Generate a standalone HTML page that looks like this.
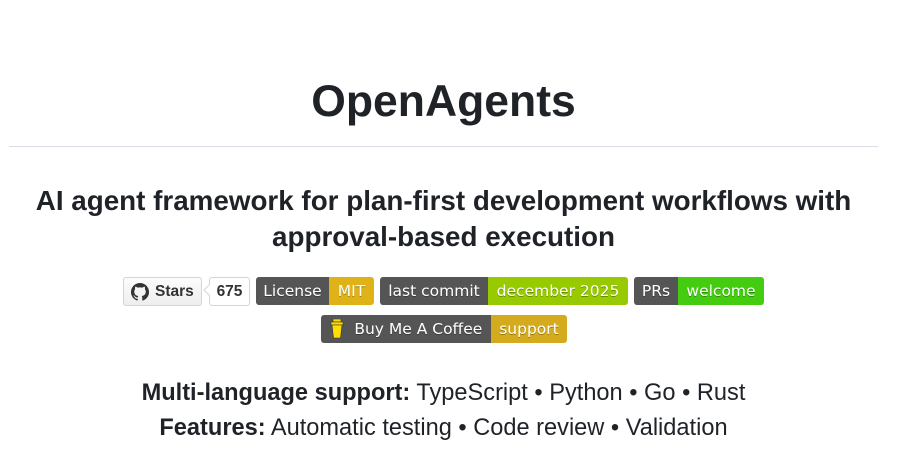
<!DOCTYPE html>
<html><head><meta charset="utf-8"><style>
body{margin:0;width:922px;height:461px;background:#fff;font-family:"Liberation Sans",Arial,sans-serif;color:#1f2328;position:relative;overflow:hidden}
.a{position:absolute}
h1{position:absolute;left:9px;width:869px;top:76px;margin:0;text-align:center;font-size:44.5px;font-weight:bold;line-height:52px}
.hr{position:absolute;left:9px;width:869px;top:146px;height:1px;background:#d8dee4}
h2{position:absolute;left:0;width:887px;top:183px;margin:0;text-align:center;font-size:27.8px;font-weight:bold;line-height:36px}
.b{position:absolute;height:28px;top:277px;border-radius:3px;overflow:hidden;display:flex;font-family:"DejaVu Sans",sans-serif;font-size:15.5px;color:#fff;line-height:28px}
.b span{display:block;text-align:center;text-shadow:0 1px 0 rgba(0,0,0,.3)}
.g{background:#555}
p{position:absolute;left:0;width:887px;margin:0;text-align:center;font-size:23.6px;line-height:30px}
</style></head><body>
<h1>OpenAgents</h1>
<div class="hr"></div>
<h2>AI agent framework for plan-first development workflows with<br>approval-based execution</h2>

<div class="a" style="left:123px;top:277px;width:77px;height:27px;border:1px solid #d5d5d5;border-radius:3px;background:linear-gradient(#fcfcfc,#eee);font-size:15.5px;font-weight:bold;line-height:27px;color:#333">
<svg class="a" style="left:7px;top:5px" width="18" height="18" viewBox="0 0 16 16"><path fill="#333" d="M8 0C3.58 0 0 3.58 0 8c0 3.54 2.29 6.530 5.47 7.59.4.07.55-.17.55-.38v-1.34c-2.23.48-2.7-1.07-2.7-1.07-.36-.92-.89-1.170-.89-1.17-.73-.5.06-.49.06-.49.8.06 1.23.83 1.23.83.71 1.22 1.87.87 2.33.66.07-.52.28-.87.51-1.07-1.78-.2-3.65-.89-3.65-3.95 0-.87.31-1.59.82-2.15-.08-.2-.36-1.02.08-2.12 0 0 .67-.21 2.2.82a7.6 7.6 0 014 0c1.53-1.04 2.2-.82 2.2-.82.44 1.1.16 1.92.08 2.12.51.56.82 1.27.82 2.15 0 3.07-1.87 3.75-3.65 3.95.29.25.54.73.54 1.48v2.2c0 .21.15.46.55.38A8 8 0 0016 8c0-4.42-3.58-8-8-8z"/></svg>
<span class="a" style="left:31px">Stars</span></div>
<div class="a" style="left:209px;top:277px;width:39px;height:27px;border:1px solid #d5d5d5;border-radius:3px;background:#fff;font-size:15.5px;font-weight:bold;line-height:27px;color:#333;text-align:center">675</div>
<div class="a" style="left:205px;top:286px;width:7px;height:7px;background:#fff;border-left:1px solid #d5d5d5;border-bottom:1px solid #d5d5d5;transform:rotate(45deg)"></div>

<div class="b" style="left:256px;width:118px"><span class="g" style="width:73px">License</span><span style="width:45px;background:#dfb317">MIT</span></div>
<div class="b" style="left:380px;width:248px"><span class="g" style="width:108px">last commit</span><span style="width:140px;background:#97ca00">december 2025</span></div>
<div class="b" style="left:634px;width:130px"><span class="g" style="width:44px">PRs</span><span style="width:86px;background:#4c1">welcome</span></div>
<div class="b" style="left:321px;width:246px;top:315px"><span class="g" style="width:170px">&nbsp;&nbsp;&nbsp;&nbsp;&nbsp;Buy Me A Coffee</span><span style="width:76px;background:#d4aa1e">support</span></div>
<svg class="a" style="left:330px;top:319px" width="14" height="20" viewBox="0 0 14 20"><rect x="3" y="0" width="8" height="3" fill="#ffdd00" stroke="#333" stroke-width=".6"/><rect x="1" y="3" width="12" height="3" fill="#ffdd00" stroke="#333" stroke-width=".6"/><path d="M2 6h10l-1.5 13h-7z" fill="#ffdd00" stroke="#333" stroke-width=".6"/></svg>

<p style="top:378px"><b>Multi-language support:</b> TypeScript • Python • Go • Rust</p>
<p style="top:413px"><b>Features:</b> Automatic testing • Code review • Validation</p>
</body></html>
